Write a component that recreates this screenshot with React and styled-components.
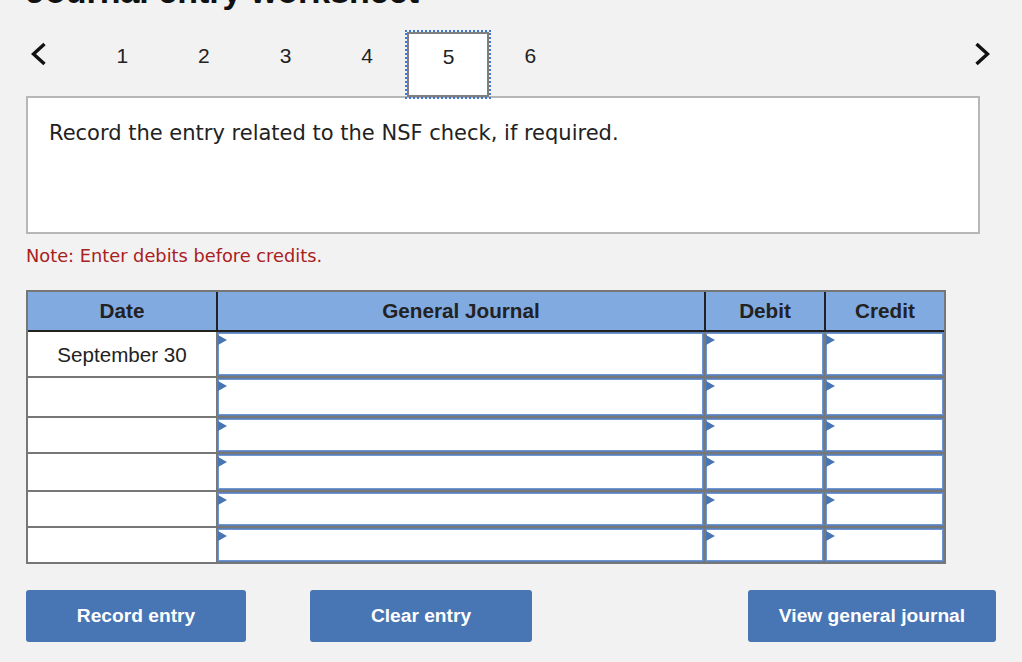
import React from "react";
import styled, { createGlobalStyle } from "styled-components";

const Global = createGlobalStyle`
  html, body { margin: 0; padding: 0; background: #f2f2f2; height: 100%; overflow: hidden; }
  #root { height: 100%; }
`;
const Page = styled.div`
  width: 1022px;
  height: 662px;
  padding: 0 26px;
  box-sizing: border-box;
  overflow: hidden;
  background: #f2f2f2;
  color: #222;
  font-family: "Liberation Sans", Arial, sans-serif;
`;
const Title = styled.h1`
  margin: -25px 0 25px;
  height: 32px;
  line-height: 32px;
  font-size: 34px;
  font-weight: 700;
  color: #111;
  white-space: nowrap;
`;
const Tabs = styled.div`
  display: flex;
  align-items: stretch;
  height: 65px;
  width: 970px;
  margin-bottom: -1px;
`;
const Arrow = styled.button`
  width: 55px;
  flex: none;
  border: 0;
  padding: ${p => (p.$right ? "0 6px 21px 0" : "0 0 21px 5px")};
  background: none;
  display: flex;
  align-items: center;
  justify-content: ${p => (p.$right ? "flex-end" : "flex-start")};
  svg { display: block; }
`;
const Tab = styled.div`
  width: 81.6px;
  flex: none;
  box-sizing: border-box;
  display: flex;
  align-items: center;
  justify-content: center;
  padding: 0 0 17px 1px;
  font-size: 21px;
  color: #222;
  position: relative;
  ${p => p.$active && `
    background: #fff;
    border: 2px solid #7f7f7f;
    outline: 2px dotted #3f78d0;
    outline-offset: 0;
    padding-bottom: 15px;
  `}
`;
const Spacer = styled.div`flex: 1;`;
const Prompt = styled.div`
  box-sizing: border-box;
  width: 954px;
  height: 138px;
  border: 2px solid #b7b7b7;
  background: #fff;
  padding: 21px 21px;
  font-family: "DejaVu Sans", Verdana, sans-serif;
  font-size: 21px;
  line-height: 28px;
  color: #222;
`;
const Note = styled.div`
  margin-top: 12px;
  height: 20px;
  line-height: 20px;
  font-family: "DejaVu Sans", Verdana, sans-serif;
  font-size: 17.8px;
  color: #a92020;
`;
const Sheet = styled.div`
  margin-top: 24px;
  width: 920px;
  box-sizing: border-box;
  border: 2px solid #777;
  background: #777;
  display: grid;
  grid-template-columns: 188px 488px 120px 120px;
  grid-template-rows: 40px 46px 40px 36px 38px 36px 34px;
`;
const Head = styled.div`
  background: #81aae0;
  border-bottom: 2px solid #222;
  border-left: ${p => (p.$first ? "0" : "2px solid #222")};
  box-sizing: border-box;
  display: flex;
  align-items: center;
  justify-content: center;
  font-weight: 700;
  font-size: 20.7px;
  color: #222;
`;
const DateCell = styled.div`
  background: #fff;
  box-sizing: border-box;
  border-bottom: ${p => (p.$last ? "0" : "2px solid #777")};
  padding-top: 1px;
  display: flex;
  align-items: center;
  justify-content: center;
  font-size: 20.6px;
  color: #222;
`;
const Entry = styled.div`
  position: relative;
  box-sizing: border-box;
  margin: ${p => (p.$last ? "1px 1px 1px 2px" : "1px 1px 3px 2px")};
  background: #fff;
  border: 1px solid #6f97d2;
  box-shadow: 0 0 0 1px #5c80b4;
  &::before {
    content: "";
    position: absolute;
    left: -1px;
    top: 1px;
    width: 0;
    height: 0;
    border-left: 9px solid #4875b4;
    border-top: 5px solid transparent;
    border-bottom: 5px solid transparent;
  }
`;
const Actions = styled.div`
  display: flex;
  margin-top: 26px;
`;
const Action = styled.button`
  width: ${p => p.$w}px;
  height: 52px;
  margin-left: ${p => p.$ml || 0};
  border: 0;
  border-radius: 3px;
  background: #4875b4;
  color: #fff;
  font-family: "Liberation Sans", Arial, sans-serif;
  font-weight: 700;
  font-size: 19.2px;
`;
const Chevron = ({ right }) => (
  <svg width="16" height="24" viewBox="0 0 16 24" fill="none">
    <path d={right ? "M2.5 2 L13.5 12 L2.5 22" : "M13.5 2 L2.5 12 L13.5 22"} stroke="#111" strokeWidth="3.4" />
  </svg>
);
const rows = ["September 30", "", "", "", "", ""];

export default function App() {
  return (
    <Page>
      <Global />
      <Title>Journal entry worksheet</Title>
      <Tabs>
        <Arrow aria-label="Previous"><Chevron /></Arrow>
        {[1, 2, 3, 4, 5, 6].map(n => (
          <Tab key={n} $active={n === 5}>{n}</Tab>
        ))}
        <Spacer />
        <Arrow $right aria-label="Next"><Chevron right /></Arrow>
      </Tabs>
      <Prompt>Record the entry related to the NSF check, if required.</Prompt>
      <Note>Note: Enter debits before credits.</Note>
      <Sheet>
        <Head $first>Date</Head>
        <Head>General Journal</Head>
        <Head>Debit</Head>
        <Head>Credit</Head>
        {rows.map((d, i) => (
          <React.Fragment key={i}>
            <DateCell $last={i === 5}>{d}</DateCell>
            <Entry $last={i === 5} />
            <Entry $last={i === 5} />
            <Entry $last={i === 5} />
          </React.Fragment>
        ))}
      </Sheet>
      <Actions>
        <Action $w={220}>Record entry</Action>
        <Action $w={222} $ml="64px">Clear entry</Action>
        <Action $w={248} $ml="216px">View general journal</Action>
      </Actions>
    </Page>
  );
}
